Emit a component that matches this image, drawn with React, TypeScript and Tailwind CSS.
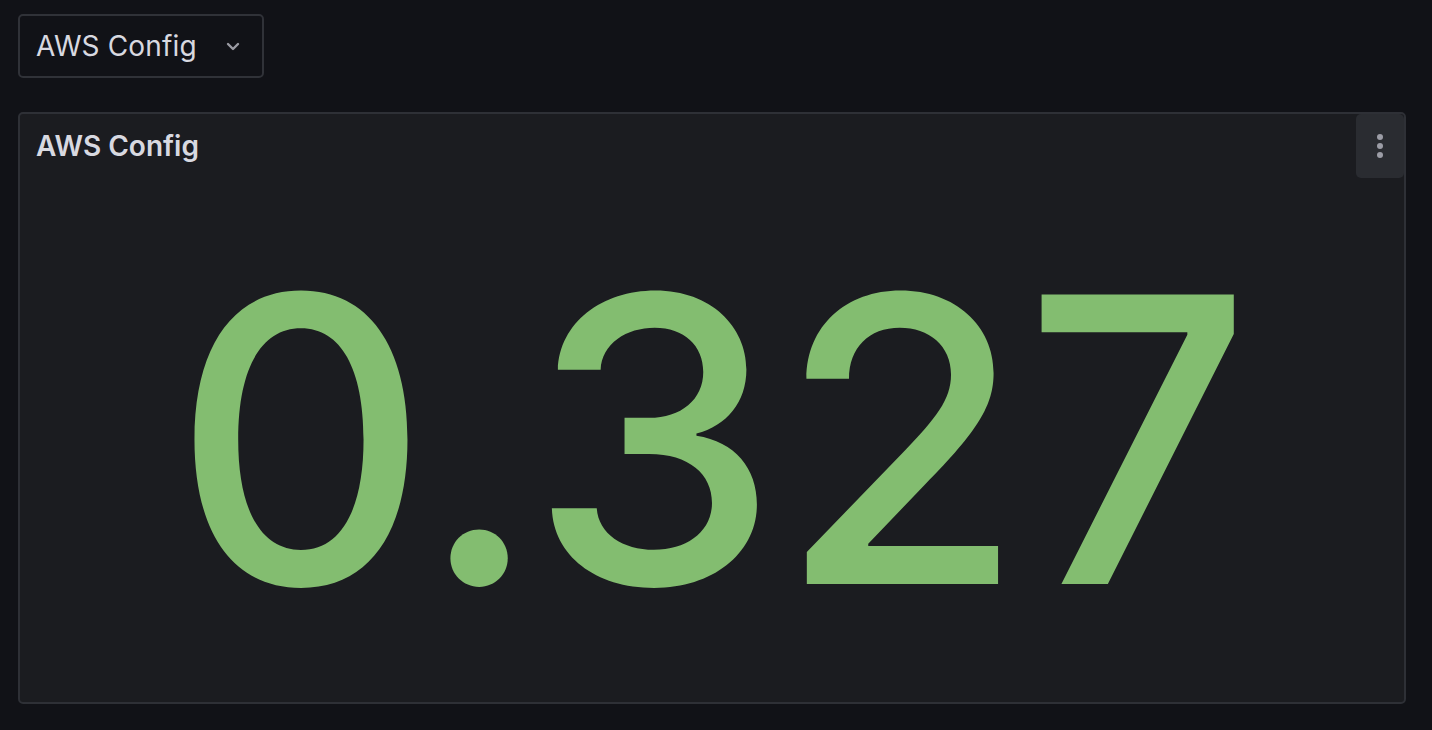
import React from "react";

export default function App() {
  return (
    <div
      className="w-[1432px] h-[730px] bg-[#111217] flex flex-col px-[18px] pt-[14px] overflow-hidden"
      style={{ fontFamily: "Inter, 'Liberation Sans', sans-serif" }}
    >
      <div className="flex">
        <div className="h-[64px] w-[246px] border-2 border-[#303238] rounded-[5px] flex items-center pl-[16px] pr-[22px] justify-between">
          <span className="text-[28px] text-[#d8d9e0] tracking-[0.15px]">AWS Config</span>
          <svg width="14" height="9" viewBox="0 0 14 9" className="mt-[1px]">
            <path d="M2 2 L7 7 L12 2" fill="none" stroke="#9a9ba3" strokeWidth="2.4" strokeLinecap="round" strokeLinejoin="round" />
          </svg>
        </div>
      </div>
      <div className="mt-[34px] h-[592px] w-[1388px] border-2 border-[#2e3036] rounded-[5px] bg-[#1b1c20] flex flex-col">
        <div className="flex items-start justify-between h-[64px]">
          <span className="text-[28px] font-semibold text-[#d8d9e0] ml-[16px] mt-[11px]">AWS Config</span>
          <div className="w-[48px] h-[64px] bg-[#2a2c31] rounded-[5px] flex flex-col items-center justify-center gap-[3px]">
            <span className="w-[6px] h-[6px] rounded-full bg-[#9c9da6]" />
            <span className="w-[6px] h-[6px] rounded-full bg-[#9c9da6]" />
            <span className="w-[6px] h-[6px] rounded-full bg-[#9c9da6]" />
          </div>
        </div>
        <div className="flex-1 flex items-center justify-center">
          <span className="text-[398px] leading-none text-[#83bd70] font-medium mt-[-2px]">0.327</span>
        </div>
      </div>
    </div>
  );
}
